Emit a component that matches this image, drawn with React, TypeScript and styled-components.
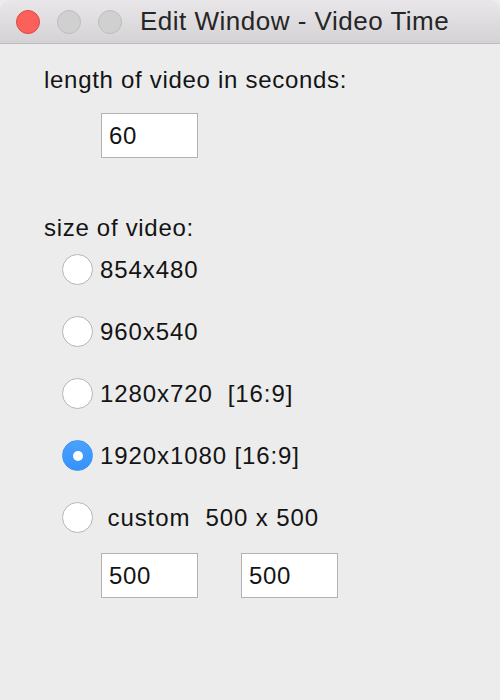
import React, { useState } from "react";
import styled, { createGlobalStyle } from "styled-components";

const GlobalStyle = createGlobalStyle`
  html, body {
    margin: 0;
    padding: 0;
    background: #ececec;
  }
`;

const sizes = [
  { id: "854", label: "854x480" },
  { id: "960", label: "960x540" },
  { id: "1280", label: "1280x720  [16:9]" },
  { id: "1920", label: "1920x1080 [16:9]" },
  { id: "custom", label: " custom  500 x 500" },
];

const App: React.FC = () => {
  const [size, setSize] = useState("1920");

  return (
    <Window>
      <GlobalStyle />
      <TitleBar>
        <Lights>
          <Light color="#fc605b" border="#de4841" />
          <Light color="#d0d0d0" border="#bdbdbd" />
          <Light color="#d0d0d0" border="#bdbdbd" />
        </Lights>
        <Title>Edit Window - Video Time</Title>
      </TitleBar>
      <Content>
        <Label>length of video in seconds:</Label>
        <LengthRow>
          <Field defaultValue="60" />
        </LengthRow>
        <SectionLabel>size of video:</SectionLabel>
        <RadioList>
          {sizes.map((s) => (
            <RadioRow key={s.id} onClick={() => setSize(s.id)}>
              <Radio checked={size === s.id} />
              <RadioText>{s.label}</RadioText>
            </RadioRow>
          ))}
        </RadioList>
        <CustomRow>
          <Field defaultValue="500" />
          <Field defaultValue="500" />
        </CustomRow>
      </Content>
    </Window>
  );
};

const Window = styled.div`
  width: 500px;
  height: 700px;
  background: #ececec;
  border-radius: 10px 10px 0 0;
  overflow: hidden;
  font-family: "Liberation Sans", Arial, sans-serif;
  color: #141414;
`;

const TitleBar = styled.div`
  height: 43px;
  display: flex;
  align-items: center;
  background: linear-gradient(#e9e7e9, #d4d2d4);
  border-bottom: 1px solid #bdbbbd;
`;

const Lights = styled.div`
  display: flex;
  gap: 17px;
  padding-left: 16px;
`;

const Light = styled.span<{ color: string; border: string }>`
  width: 24px;
  height: 24px;
  border-radius: 50%;
  box-sizing: border-box;
  background: ${(p) => p.color};
  border: 1px solid ${(p) => p.border};
`;

const Title = styled.div`
  margin-left: 18px;
  font-size: 26px;
  letter-spacing: 0.5px;
  color: #262626;
`;

const Content = styled.div`
  padding: 21px 0 0 44px;
`;

const Label = styled.div`
  font-size: 24px;
  line-height: 30px;
  letter-spacing: 0.7px;
`;

const LengthRow = styled.div`
  margin: 18px 0 0 57px;
`;

const SectionLabel = styled(Label)`
  margin-top: 55px;
`;

const Field = styled.input`
  width: 97px;
  height: 45px;
  box-sizing: border-box;
  border: 1px solid #b2b2b2;
  background: #fff;
  padding: 0 7px;
  font-family: "Liberation Sans", Arial, sans-serif;
  font-size: 24px;
  letter-spacing: 0.6px;
  color: #141414;
  outline: none;
`;

const RadioList = styled.div`
  display: flex;
  flex-direction: column;
  gap: 31px;
  margin: 11px 0 0 18px;
`;

const RadioRow = styled.div`
  display: flex;
  align-items: center;
  gap: 7px;
  height: 31px;
  cursor: default;
`;

const Radio = styled.span<{ checked: boolean }>`
  position: relative;
  width: 31px;
  height: 31px;
  border-radius: 50%;
  box-sizing: border-box;
  flex: none;
  background: ${(p) =>
    p.checked ? "linear-gradient(#4aa2fd, #3592fb)" : "#fff"};
  border: 1px solid ${(p) => (p.checked ? "#3b93f7" : "#b6b6b6")};

  &::after {
    content: "";
    display: ${(p) => (p.checked ? "block" : "none")};
    position: absolute;
    left: 50%;
    top: 50%;
    width: 10px;
    height: 10px;
    margin: -5px 0 0 -5px;
    border-radius: 50%;
    background: #fff;
  }
`;

const RadioText = styled.span`
  font-size: 24px;
  letter-spacing: 0.9px;
  white-space: pre;
`;

const CustomRow = styled.div`
  display: flex;
  gap: 43px;
  margin: 20px 0 0 57px;
`;

export default App;
